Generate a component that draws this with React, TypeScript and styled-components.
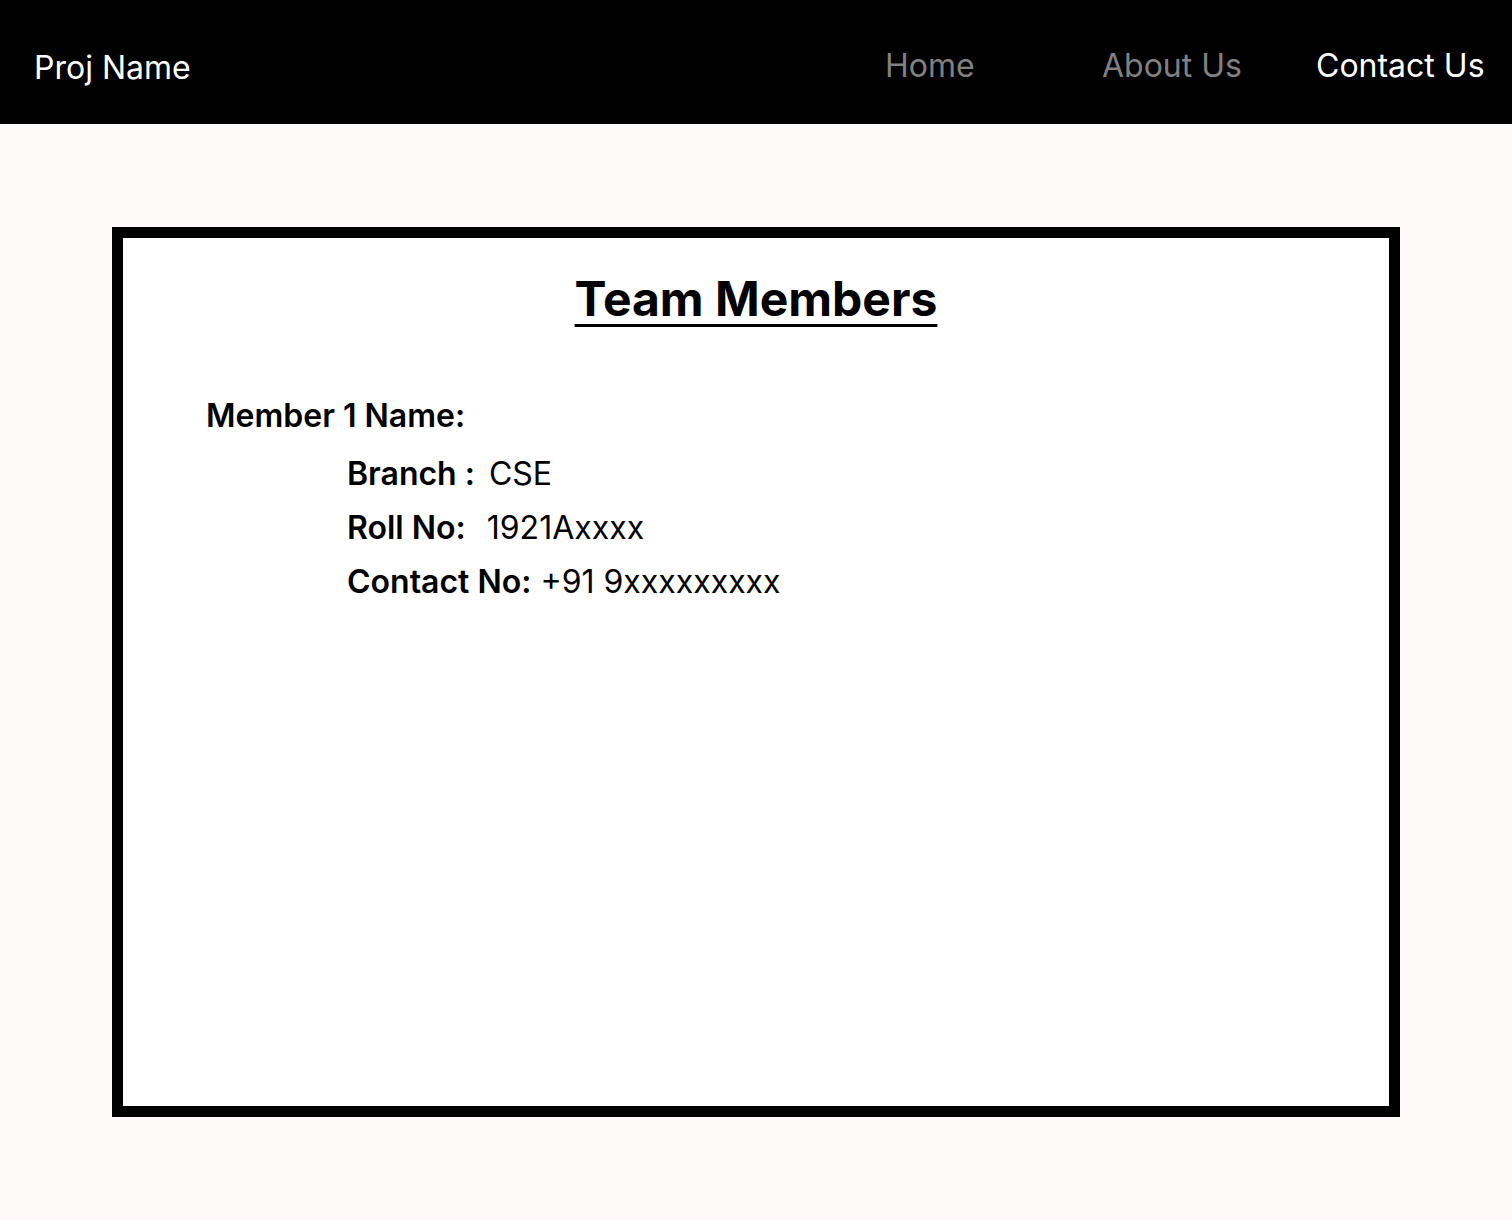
import styled, { createGlobalStyle } from 'styled-components';

const GlobalStyle = createGlobalStyle`
    body {
        margin: 0;
        background: #fffafa;
        font-family: Inter, "Noto Sans", sans-serif;
    }
`;

const Header = styled.header`
    height: 124px;
    display: flex;
    align-items: center;
    justify-content: space-between;
    padding: 6px 0 0 34px;
    background: #000;
    box-sizing: border-box;
`;

const Brand = styled.div`
    font-size: 32px;
    color: #fff;
    padding-top: 4px;
`;

const Nav = styled.nav`
    display: grid;
    grid-template-columns: 217px 214px 196px;
`;

const NavLink = styled.a<{ $active?: boolean }>`
    font-size: 32px;
    color: ${(p) => (p.$active ? '#fff' : '#808080')};
    text-decoration: none;
`;

const Main = styled.main`
    padding: 103px 112px 103px;
`;

const Card = styled.section`
    height: 890px;
    box-sizing: border-box;
    border: 11px solid #000;
    background: #fff;
    padding: 32px 83px 0;
`;

const Title = styled.h1`
    margin: 0;
    text-align: center;
    font-size: 48px;
    line-height: 58px;
    font-weight: 700;
    text-decoration: underline;
    text-decoration-thickness: 3px;
    text-underline-offset: 8px;
`;

const MemberName = styled.h2`
    margin: 61px 0 4px;
    font-size: 32px;
    line-height: 54px;
    font-weight: 600;
`;

const Details = styled.div`
    padding-left: 141px;
`;

const Row = styled.div`
    display: flex;
    font-size: 32px;
    line-height: 54px;
`;

const Label = styled.span`
    font-weight: 600;
`;

const Value = styled.span<{ $gap: number }>`
    margin-left: ${(p) => p.$gap}px;
`;

const members = [
    {
        name: 'Member 1 Name:',
        rows: [
            { label: 'Branch :', value: 'CSE', gap: 14 },
            { label: 'Roll No:', value: '1921Axxxx', gap: 21 },
            { label: 'Contact No:', value: '+91 9xxxxxxxxx', gap: 9 },
        ],
    },
];

const App = () => {
    return (
        <>
            <GlobalStyle />
            <Header>
                <Brand>Proj Name</Brand>
                <Nav>
                    <NavLink href="#">Home</NavLink>
                    <NavLink href="#">About Us</NavLink>
                    <NavLink href="#" $active>
                        Contact Us
                    </NavLink>
                </Nav>
            </Header>
            <Main>
                <Card>
                    <Title>Team Members</Title>
                    {members.map((m) => (
                        <div key={m.name}>
                            <MemberName>{m.name}</MemberName>
                            <Details>
                                {m.rows.map((r) => (
                                    <Row key={r.label}>
                                        <Label>{r.label}</Label>
                                        <Value $gap={r.gap}>{r.value}</Value>
                                    </Row>
                                ))}
                            </Details>
                        </div>
                    ))}
                </Card>
            </Main>
        </>
    );
};

export default App;
